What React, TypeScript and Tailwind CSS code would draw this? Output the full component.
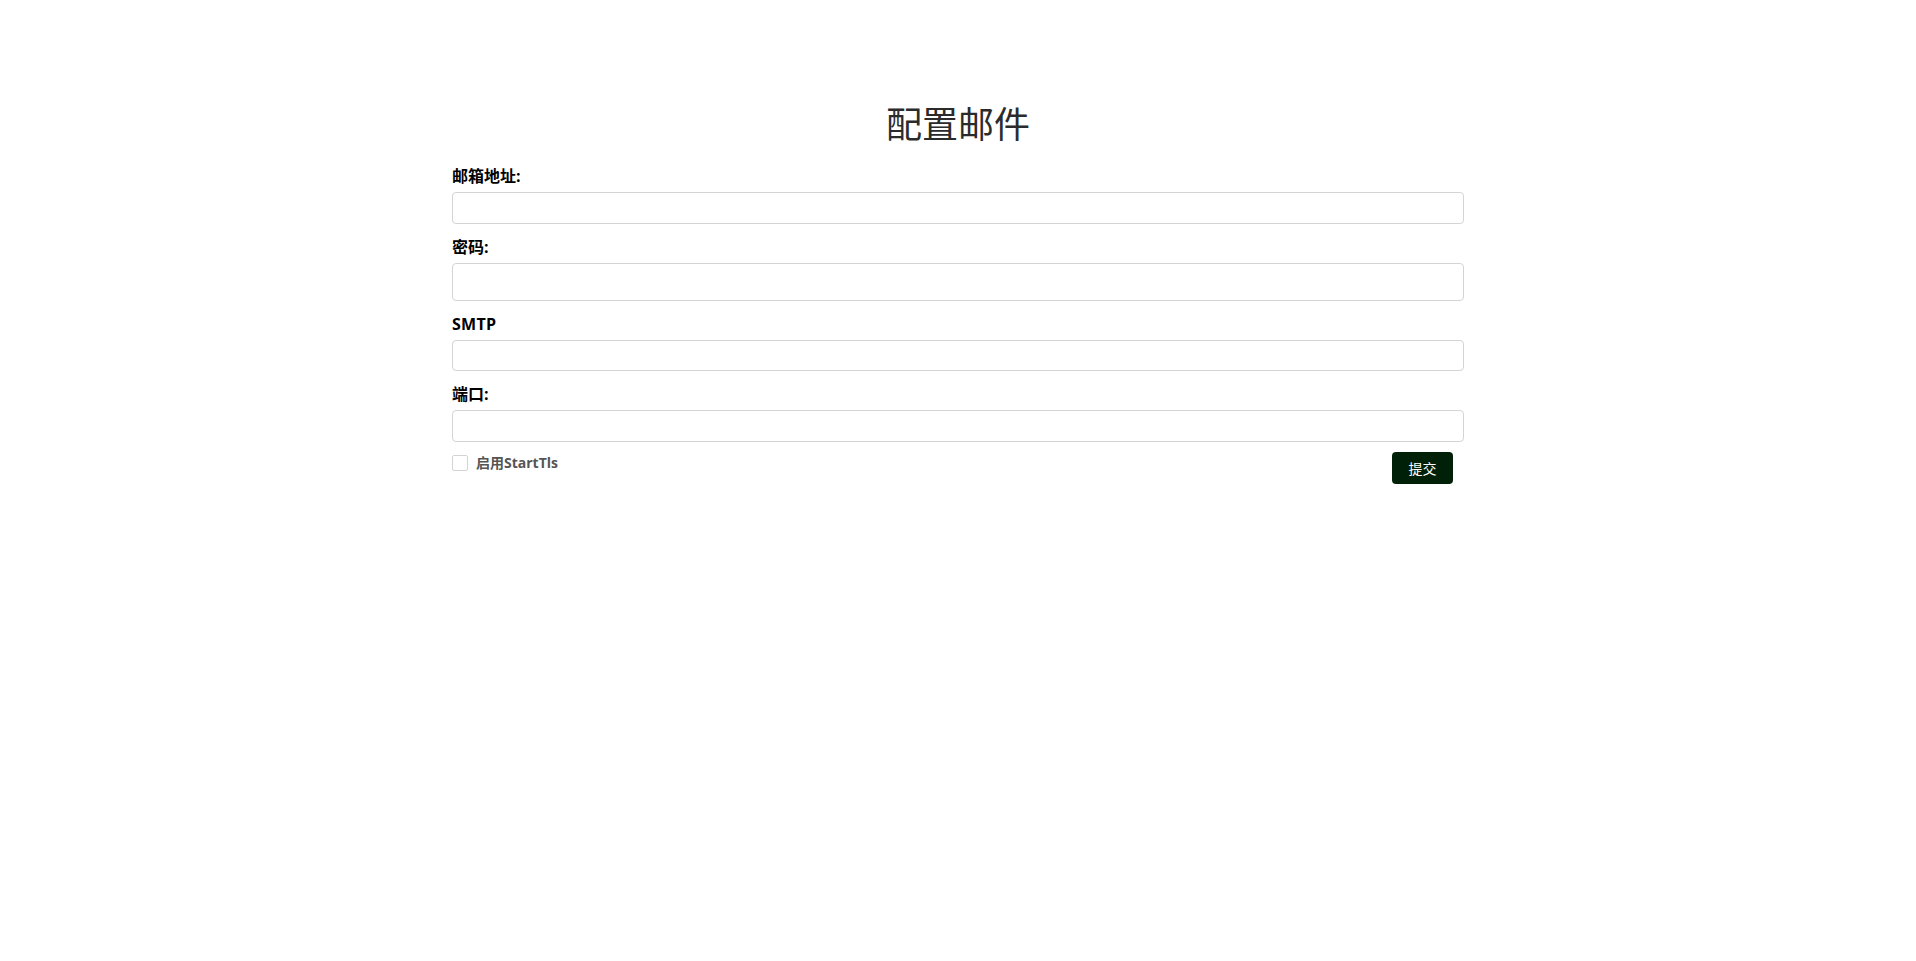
import React from "react";

export default function App() {
  const font = "font-['Open_Sans','Noto_Sans_CJK_SC',sans-serif]";
  const label = `block text-[16px] leading-[16px] font-bold text-black mb-[8px] ${font}`;
  const input =
    "block w-full border border-[#d4d4d4] rounded-[4px] bg-white outline-none px-3";
  return (
    <div className={`min-h-screen bg-white ${font}`}>
      <div className="w-[1012px] mx-auto pt-[102px]">
        <h1 className="text-[36px] leading-[40px] font-normal text-center text-[#2b2b2b] font-['Noto_Sans_CJK_SC',sans-serif] mb-[26px]">
          配置邮件
        </h1>
        <form onSubmit={(e) => e.preventDefault()}>
          <label className={label}>邮箱地址:</label>
          <input type="text" className={`${input} h-[32px] mb-[15px]`} />
          <label className={label}>密码:</label>
          <input type="password" className={`${input} h-[38px] mb-[15px]`} />
          <label className={`${label} tracking-[0.3px]`}>SMTP</label>
          <input type="text" className={`${input} h-[31px] mb-[15px]`} />
          <label className={label}>端口:</label>
          <input type="text" className={`${input} h-[32px]`} />
          <div className="flex items-start justify-between mt-[10px]">
            <label className="flex items-center gap-[8px] mt-[3px] text-[14px] leading-[16px] font-bold text-[#555]">
              <span className="block w-[16px] h-[16px] border border-[#d4d4d4] rounded-[2px] bg-white" />
              <span>启用StartTls</span>
            </label>
            <button
              type="submit"
              className="w-[61px] h-[32px] mr-[11px] rounded-[4px] bg-[#002108] text-white text-[14px] font-normal"
            >
              提交
            </button>
          </div>
        </form>
      </div>
    </div>
  );
}
